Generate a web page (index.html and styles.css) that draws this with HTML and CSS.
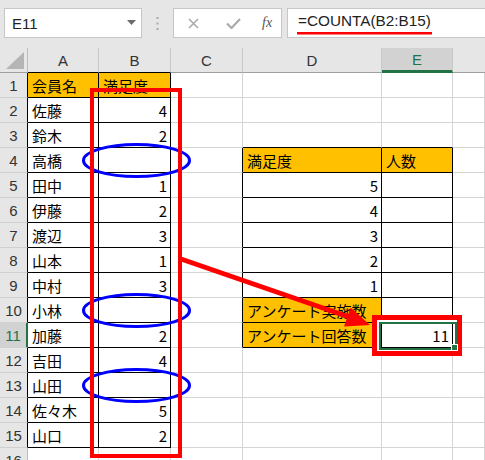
FILE: index.html
```html
<!DOCTYPE html>
<html lang="ja">
<head>
<meta charset="utf-8">
<link rel="stylesheet" href="styles.css">
</head>
<body>
<div class="app">
  <div class="topbar">
    <div class="namebox">
      <span class="nb-text">E11</span>
      <svg class="caret" width="9" height="5" viewBox="0 0 9 5"><path d="M0 0h9L4.5 5z" fill="#6b6b6b"/></svg>
    </div>
    <div class="dots">
      <svg width="3" height="13" viewBox="0 0 3 13"><rect x="0.5" y="0" width="2" height="2" fill="#a8a8a8"/><rect x="0.5" y="5.5" width="2" height="2" fill="#a8a8a8"/><rect x="0.5" y="11" width="2" height="2" fill="#a8a8a8"/></svg>
    </div>
    <div class="fbtns">
      <svg class="ico" width="11" height="11" viewBox="0 0 11 11"><path d="M1 1l9 9M10 1l-9 9" stroke="#ababab" stroke-width="1.6" fill="none"/></svg>
      <svg class="ico" width="15" height="11" viewBox="0 0 15 11"><path d="M1 5.5l4.5 4.5L14 1" stroke="#ababab" stroke-width="2.2" fill="none"/></svg>
      <span class="fx">fx</span>
    </div>
    <div class="fbox"><span class="formula">=COUNTA(B2:B15)</span></div>
  </div>

  <div class="sheet">
    <!-- header row -->
    <div class="corner"><svg width="18" height="17" viewBox="0 0 18 17"><path d="M18 0V17H0z" fill="#b5b5b5"/></svg></div>
    <div class="ch chk">A</div>
    <div class="ch chk">B</div>
    <div class="ch">C</div>
    <div class="ch">D</div>
    <div class="ch chsel">E</div>
    <div class="ch chlast"></div>

    <!-- 1 -->
    <div class="rh rhk">1</div>
    <div class="c k y">会員名</div>
    <div class="c k y">満足度</div>
    <div class="c"></div><div class="c"></div><div class="c"></div><div class="c"></div>
    <!-- 2 -->
    <div class="rh rhk">2</div>
    <div class="c k">佐藤</div>
    <div class="c k n">4</div>
    <div class="c"></div><div class="c"></div><div class="c"></div><div class="c"></div>
    <!-- 3 -->
    <div class="rh rhk">3</div>
    <div class="c k">鈴木</div>
    <div class="c k n">2</div>
    <div class="c"></div><div class="c kb"></div><div class="c kb"></div><div class="c"></div>
    <!-- 4 -->
    <div class="rh rhk">4</div>
    <div class="c k">高橋</div>
    <div class="c k n"></div>
    <div class="c kr"></div>
    <div class="c k y">満足度</div>
    <div class="c k y">人数</div>
    <div class="c"></div>
    <!-- 5 -->
    <div class="rh rhk">5</div>
    <div class="c k">田中</div>
    <div class="c k n">1</div>
    <div class="c kr"></div>
    <div class="c k n">5</div>
    <div class="c k"></div>
    <div class="c"></div>
    <!-- 6 -->
    <div class="rh rhk">6</div>
    <div class="c k">伊藤</div>
    <div class="c k n">2</div>
    <div class="c kr"></div>
    <div class="c k n">4</div>
    <div class="c k"></div>
    <div class="c"></div>
    <!-- 7 -->
    <div class="rh rhk">7</div>
    <div class="c k">渡辺</div>
    <div class="c k n">3</div>
    <div class="c kr"></div>
    <div class="c k n">3</div>
    <div class="c k"></div>
    <div class="c"></div>
    <!-- 8 -->
    <div class="rh rhk">8</div>
    <div class="c k">山本</div>
    <div class="c k n">1</div>
    <div class="c kr"></div>
    <div class="c k n">2</div>
    <div class="c k"></div>
    <div class="c"></div>
    <!-- 9 -->
    <div class="rh rhk">9</div>
    <div class="c k">中村</div>
    <div class="c k n">3</div>
    <div class="c kr"></div>
    <div class="c k n">1</div>
    <div class="c k"></div>
    <div class="c"></div>
    <!-- 10 -->
    <div class="rh rhk">10</div>
    <div class="c k">小林</div>
    <div class="c k n"></div>
    <div class="c kr"></div>
    <div class="c k y">アンケート実施数</div>
    <div class="c k"></div>
    <div class="c"></div>
    <!-- 11 -->
    <div class="rh rhsel">11</div>
    <div class="c k">加藤</div>
    <div class="c k n">2</div>
    <div class="c kr"></div>
    <div class="c k y">アンケート回答数</div>
    <div class="c k n">11</div>
    <div class="c"></div>
    <!-- 12 -->
    <div class="rh rhk">12</div>
    <div class="c k">吉田</div>
    <div class="c k n">4</div>
    <div class="c"></div><div class="c"></div><div class="c"></div><div class="c"></div>
    <!-- 13 -->
    <div class="rh rhk">13</div>
    <div class="c k">山田</div>
    <div class="c k n"></div>
    <div class="c"></div><div class="c"></div><div class="c"></div><div class="c"></div>
    <!-- 14 -->
    <div class="rh rhk">14</div>
    <div class="c k">佐々木</div>
    <div class="c k n">5</div>
    <div class="c"></div><div class="c"></div><div class="c"></div><div class="c"></div>
    <!-- 15 -->
    <div class="rh rhk">15</div>
    <div class="c k">山口</div>
    <div class="c k n">2</div>
    <div class="c"></div><div class="c"></div><div class="c"></div><div class="c"></div>
    <!-- 16 -->
    <div class="rh">16</div>
    <div class="c"></div><div class="c"></div><div class="c"></div><div class="c"></div><div class="c"></div><div class="c"></div>
  </div>

  <svg class="overlay" width="485" height="460" viewBox="0 0 485 460">
    <rect x="297" y="32" width="135" height="2.5" fill="#ff0000"/>
    <ellipse cx="136.5" cy="160.5" rx="53" ry="16" fill="none" stroke="#0000ff" stroke-width="3"/>
    <ellipse cx="136.5" cy="310.5" rx="53" ry="16" fill="none" stroke="#0000ff" stroke-width="3"/>
    <ellipse cx="136.5" cy="385.5" rx="53" ry="16" fill="none" stroke="#0000ff" stroke-width="3"/>
    <rect x="92" y="90" width="88" height="366" fill="none" stroke="#ff0000" stroke-width="4"/>
    <line x1="181" y1="259" x2="349" y2="317" stroke="#ff0000" stroke-width="5"/>
    <polygon points="370,325 344,326.6 350.6,307.6" fill="#ff0000"/>
    <rect x="378" y="321" width="80" height="30" fill="none" stroke="#ffffff" stroke-width="2"/>
    <rect x="374.5" y="317.5" width="85" height="36" fill="none" stroke="#ff0000" stroke-width="5"/>
    <rect x="380" y="323" width="76" height="26" fill="none" stroke="#217346" stroke-width="2"/>
    <rect x="451.5" y="344.5" width="6" height="6" fill="#217346" stroke="#ffffff" stroke-width="1"/>
  </svg>
</div>
</body>
</html>
```

FILE: styles.css
```css
* { box-sizing: border-box; }
html, body { margin: 0; padding: 0; background: #ffffff; }
.app {
  position: relative;
  width: 485px;
  height: 460px;
  overflow: hidden;
  font-family: "Noto Sans CJK JP", "Noto Sans", sans-serif;
  color: #000;
}
.topbar {
  height: 48px;
  background: #e6e6e6;
  display: flex;
  align-items: flex-start;
  padding: 8px 0 0 4px;
}
.namebox {
  width: 138px;
  height: 30px;
  background: #fff;
  border: 1px solid #c6c6c6;
  display: flex;
  align-items: center;
  justify-content: space-between;
  padding: 0 5px 0 7px;
}
.nb-text {
  font-family: "Liberation Sans", Arial, sans-serif;
  font-size: 15px;
  color: #222;
}
.caret { margin-bottom: 1px; }
.dots {
  width: 31px;
  height: 30px;
  display: flex;
  align-items: center;
  justify-content: center;
}
.fbtns {
  width: 109px;
  height: 30px;
  background: #fff;
  border: 1px solid #c6c6c6;
  display: flex;
  align-items: center;
  padding-left: 14px;
  gap: 0;
}
.fbtns .ico:first-child { margin-right: 27px; }
.fbtns .ico:nth-child(2) { margin-right: 21px; }
.fx {
  font-family: "Liberation Serif", "Times New Roman", serif;
  font-style: italic;
  font-size: 14px;
  color: #555;
}
.fbox {
  margin-left: 5px;
  flex: 1;
  height: 30px;
  background: #fff;
  border: 1px solid #c6c6c6;
  border-right: none;
  display: flex;
  align-items: center;
  padding-left: 10px;
}
.formula {
  font-family: "Liberation Sans", Arial, sans-serif;
  font-size: 15.3px;
  color: #222;
  margin-top: -4px;
}

.sheet {
  display: grid;
  grid-template-columns: 28px 71px 72px 72px 139px 71px 1fr;
  grid-template-rows: 25px;
  grid-auto-rows: 25px;
}
.corner {
  background: #e6e6e6;
  border-right: 1px solid #bdbdbd;
  border-bottom: 1px solid #9f9f9f;
  display: flex;
  align-items: flex-end;
  justify-content: flex-end;
  padding: 0 3px 3px 0;
}
.ch {
  background: #e6e6e6;
  border-right: 1px solid #c8c8c8;
  border-bottom: 1px solid #9f9f9f;
  display: flex;
  align-items: center;
  justify-content: center;
  font-family: "Liberation Sans", Arial, sans-serif;
  font-size: 15px;
  color: #333;
}
.chk { border-bottom-color: #000; }
.chsel {
  background: #d2d2d2;
  color: #217346;
  border-bottom: 3px solid #217346;
}
.chlast { border-right: none; }
.rh {
  background: #e6e6e6;
  border-right: 1px solid #bdbdbd;
  border-bottom: 1px solid #d0d0d0;
  display: flex;
  align-items: center;
  justify-content: center;
  font-family: "Liberation Sans", Arial, sans-serif;
  font-size: 15px;
  color: #333;
}
.rhk { border-right-color: #000; }
.rhsel {
  background: #d2d2d2;
  color: #217346;
  border-right: 2px solid #217346;
}
.c {
  border-right: 1px solid #d4d4d4;
  border-bottom: 1px solid #d4d4d4;
  display: flex;
  align-items: center;
  padding: 1px 3px 0 4px;
  font-size: 15px;
  white-space: nowrap;
  overflow: hidden;
}
.n { justify-content: flex-end; }
.y { background: #ffc000; }
.k { border-right-color: #000; border-bottom-color: #000; }
.kr { border-right-color: #000; }
.kb { border-bottom-color: #000; }

.overlay {
  position: absolute;
  left: 0;
  top: 0;
  pointer-events: none;
}
```
